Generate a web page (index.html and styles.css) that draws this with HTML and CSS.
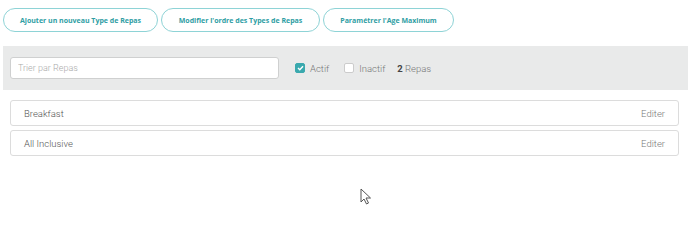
FILE: index.html
```html
<!DOCTYPE html>
<html lang="fr">
<head>
    <meta charset="UTF-8">
    <title>Types de Repas</title>
    <link rel="stylesheet" href="styles.css">
</head>
<body>
    <div class="actions">
        <button class="btn btn-add">Ajouter un nouveau Type de Repas</button>
        <button class="btn btn-order">Modifier l'ordre des Types de Repas</button>
        <button class="btn btn-age">Paramétrer l'Age Maximum</button>
    </div>

    <div class="filters">
        <input class="search" type="text" placeholder="Trier par Repas">
        <label class="check"><span class="box box-on">
            <svg width="7" height="6" viewBox="0 0 7 6"><path d="M1 3l1.8 1.8L6 1.2" fill="none" stroke="#fff" stroke-width="1.4"/></svg>
        </span>Actif</label>
        <label class="check"><span class="box"></span>Inactif</label>
        <span class="count"><b>2</b> Repas</span>
    </div>

    <div class="list">
        <div class="row"><span>Breakfast</span><a class="edit">Editer</a></div>
        <div class="row"><span>All Inclusive</span><a class="edit">Editer</a></div>
    </div>

    <svg class="cursor" width="12" height="18" viewBox="0 0 12 18">
        <path d="M1 1v13l3-3 2.5 5 2-1-2.5-5h4.5z" fill="#fff" stroke="#555" stroke-width="1"/>
    </svg>
</body>
</html>
```

FILE: styles.css
```css
body {
    margin: 0;
    font-family: Roboto, 'Liberation Sans', sans-serif;
    font-weight: 300;
    color: #555;
    background: #fff;
    position: relative;
    height: 244px;
}

.actions {
    display: flex;
    gap: 3px;
    padding: 8px 3px 0 3px;
}

.btn {
    height: 24px;
    border: 1px solid #8ed3d6;
    border-radius: 12px;
    background: #fff;
    color: #2f9ea4;
    font-family: 'Open Sans', sans-serif;
    font-weight: 700;
    font-size: 7px;
    padding: 0;
}

.btn-add { width: 155px; }
.btn-order { width: 159px; }
.btn-age { width: 131px; }

.filters {
    display: flex;
    align-items: center;
    margin: 14px 0 0 3px;
    height: 44px;
    background: #e9eaea;
    padding-left: 7px;
}

.search {
    box-sizing: border-box;
    width: 269px;
    height: 22px;
    border: 1px solid #cfd0d0;
    border-radius: 3px;
    padding: 0 7px;
    font-family: Roboto, sans-serif;
    font-weight: 300;
    font-size: 9px;
    color: #555;
}

.search::placeholder {
    color: #aaa;
}

.check {
    display: flex;
    align-items: center;
    gap: 5px;
    font-size: 9.5px;
    color: #777;
    margin-left: 16px;
}

.check + .check {
    margin-left: 15px;
}

.box {
    box-sizing: border-box;
    width: 10px;
    height: 10px;
    border: 1px solid #ccc;
    border-radius: 2px;
    background: #fff;
    display: flex;
    align-items: center;
    justify-content: center;
}

.box-on {
    background: #3aa9ae;
    border-color: #3aa9ae;
}

.count {
    margin-left: 12px;
    font-size: 9.5px;
    color: #777;
}

.count b {
    font-weight: 700;
    color: #444;
}

.list {
    display: flex;
    flex-direction: column;
    gap: 4px;
    padding: 10px 9px 0 10px;
}

.row {
    box-sizing: border-box;
    height: 26px;
    border: 1px solid #dcdcdc;
    border-radius: 3px;
    display: flex;
    align-items: center;
    justify-content: space-between;
    padding: 0 13px;
    font-size: 9.5px;
    color: #555;
}

.edit {
    color: #777;
}

.cursor {
    position: absolute;
    left: 360px;
    top: 188px;
}
```
